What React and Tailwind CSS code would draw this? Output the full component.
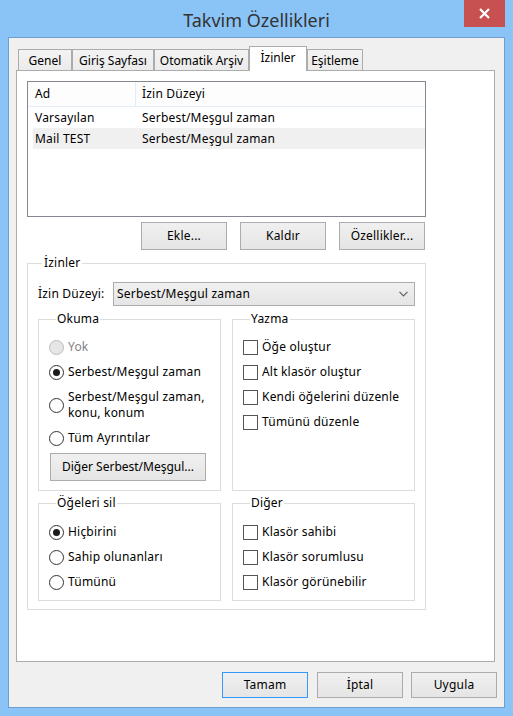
import React from "react";

function Radio({ checked, disabled }) {
  return (
    <span
      className={
        disabled
          ? "w-[15px] h-[15px] rounded-full border border-[#bcbcbc] bg-[#e6e6e6] shrink-0"
          : "w-[15px] h-[15px] rounded-full border border-[#333333] bg-white shrink-0 flex items-center justify-center"
      }
    >
      {checked && <span className="w-[7px] h-[7px] rounded-full bg-[#1a1a1a]" />}
    </span>
  );
}

function RadioRow({ children, checked, disabled }) {
  return (
    <div className="flex items-center gap-[4px]">
      <Radio checked={checked} disabled={disabled} />
      <span className={disabled ? "text-[#838383]" : ""}>{children}</span>
    </div>
  );
}

function CheckRow({ children }) {
  return (
    <div className="flex items-center gap-[4px]">
      <span className="w-[15px] h-[15px] border border-[#555555] bg-white shrink-0" />
      <span>{children}</span>
    </div>
  );
}

function Btn({ children, focus }) {
  return (
    <div
      className={
        focus
          ? "w-[86px] h-[26px] border border-[#3399ff] bg-gradient-to-b from-[#f0f0f0] to-[#e5e5e5] flex items-center justify-center"
          : "w-[86px] h-[26px] border border-[#acacac] bg-gradient-to-b from-[#f0f0f0] to-[#e5e5e5] flex items-center justify-center"
      }
    >
      {children}
    </div>
  );
}

function PanelBtn({ children }) {
  return (
    <div className="w-[86px] h-[28px] border border-[#acacac] bg-gradient-to-b from-[#f0f0f0] to-[#e5e5e5] flex items-center justify-center">
      {children}
    </div>
  );
}

export default function App() {
  return (
    <div className="w-[513px] h-[716px] bg-[#8ac4f6] flex flex-col font-['Noto_Sans',sans-serif] text-[12px] leading-[16px] tracking-[0.2px] text-black">
      {/* title bar */}
      <div className="h-[37px] grid grid-cols-[1fr_auto_1fr] shrink-0">
        <div />
        <div className="self-center text-[18px] leading-[24px] tracking-normal text-[#333333] pt-[2px]">
          Takvim Özellikleri
        </div>
        <div className="flex justify-end items-start">
          <div className="w-[41px] h-[27px] bg-[#c75050] mr-[8px] flex items-center justify-center">
            <svg width="11" height="11" viewBox="0 0 11 11">
              <path d="M1 1 L10 10 M10 1 L1 10" stroke="white" strokeWidth="2.2" />
            </svg>
          </div>
        </div>
      </div>

      {/* client */}
      <div className="ml-[8px] w-[497px] h-[671px] border border-[#6e9fd0] bg-[#f0f0f0] flex flex-col pt-[8px] shrink-0">
        {/* tabs */}
        <div className="flex items-end h-[24px] ml-[9px] tracking-normal">
          <div className="w-[54px] h-[21px] border border-b-0 border-[#acacac] bg-gradient-to-b from-[#f3f3f3] to-[#ebebeb] pt-[3px] text-center">
            Genel
          </div>
          <div className="w-[82px] h-[21px] border border-b-0 border-[#acacac] bg-gradient-to-b from-[#f3f3f3] to-[#ebebeb] pt-[3px] text-center whitespace-nowrap">
            Giriş Sayfası
          </div>
          <div className="w-[95px] h-[21px] border border-b-0 border-[#acacac] bg-gradient-to-b from-[#f3f3f3] to-[#ebebeb] pt-[3px] text-center whitespace-nowrap">
            Otomatik Arşiv
          </div>
          <div className="w-[58px] h-[25px] -mb-px relative z-10 border border-b-0 border-[#acacac] bg-white pt-[3px] text-center">
            İzinler
          </div>
          <div className="w-[56px] h-[21px] border border-b-0 border-[#acacac] bg-gradient-to-b from-[#f3f3f3] to-[#ebebeb] pt-[3px] text-center">
            Eşitleme
          </div>
        </div>

        {/* panel */}
        <div className="ml-[7px] w-[479px] h-[592px] bg-white border border-[#acacac] pl-[10px] pt-[10px]">
          {/* list */}
          <div className="w-[399px] h-[136px] border border-[#828790] flex flex-col">
            <div className="flex h-[25px] border-b border-[#e3ecf7] items-center bg-[#fdfdfd]">
              <div className="w-[108px] h-full pl-[7px] border-r border-[#e3ecf7] flex items-center">Ad</div>
              <div className="pl-[6px]">İzin Düzeyi</div>
            </div>
            <div className="flex h-[21px] items-center ml-[5px] pl-[2px]">
              <div className="w-[107px]">Varsayılan</div>
              <div>Serbest/Meşgul zaman</div>
            </div>
            <div className="flex h-[21px] items-center ml-[5px] pl-[2px] bg-[#f0f0f0]">
              <div className="w-[107px]">Mail TEST</div>
              <div>Serbest/Meşgul zaman</div>
            </div>
          </div>

          {/* list buttons */}
          <div className="w-[399px] mt-[5px] flex justify-end gap-[13px] pr-px">
            <PanelBtn>Ekle...</PanelBtn>
            <PanelBtn>Kaldır</PanelBtn>
            <PanelBtn>Özellikler...</PanelBtn>
          </div>

          {/* İzinler group */}
          <fieldset className="mt-[5px] w-[399px] border border-[#dcdcdc] px-[10px] pt-[11px] pb-[8px]">
            <legend className="ml-[4px] px-[2px] leading-[16px]">İzinler</legend>
            <div className="flex items-center h-[24px]">
              <span>İzin Düzeyi:</span>
              <div className="ml-auto w-[302px] h-[24px] border border-[#acacac] bg-gradient-to-b from-[#f0f0f0] to-[#e5e5e5] flex items-center pl-[3px] pr-[6px]">
                <span className="flex-1">Serbest/Meşgul zaman</span>
                <svg width="9" height="6" viewBox="0 0 9 6">
                  <path d="M0.5 0.8 L4.5 4.8 L8.5 0.8" stroke="#606060" strokeWidth="1.2" fill="none" />
                </svg>
              </div>
            </div>

            <div className="mt-[5px] flex gap-[11px]">
              <fieldset className="w-[183px] h-[180px] border border-[#dcdcdc] pl-[10px] pt-[12px]">
                <legend className="ml-[7px] px-px leading-[16px]">Okuma</legend>
                <div className="flex flex-col gap-[9px]">
                  <RadioRow disabled>Yok</RadioRow>
                  <RadioRow checked>Serbest/Meşgul zaman</RadioRow>
                  <RadioRow>
                    Serbest/Meşgul zaman,
                    <br />
                    konu, konum
                  </RadioRow>
                  <RadioRow>Tüm Ayrıntılar</RadioRow>
                </div>
                <div className="mt-[7px] ml-px w-[156px] h-[28px] border border-[#acacac] bg-gradient-to-b from-[#f0f0f0] to-[#e5e5e5] flex items-center justify-center whitespace-nowrap tracking-normal">
                  Diğer Serbest/Meşgul...
                </div>
              </fieldset>
              <fieldset className="w-[183px] h-[180px] border border-[#dcdcdc] pl-[10px] pt-[12px]">
                <legend className="ml-[7px] px-px leading-[16px]">Yazma</legend>
                <div className="flex flex-col gap-[9px]">
                  <CheckRow>Öğe oluştur</CheckRow>
                  <CheckRow>Alt klasör oluştur</CheckRow>
                  <CheckRow>Kendi öğelerini düzenle</CheckRow>
                  <CheckRow>Tümünü düzenle</CheckRow>
                </div>
              </fieldset>
            </div>

            <div className="mt-[4px] flex gap-[11px]">
              <fieldset className="w-[183px] h-[106px] border border-[#dcdcdc] pl-[10px] pt-[13px]">
                <legend className="ml-[7px] px-px leading-[16px]">Öğeleri sil</legend>
                <div className="flex flex-col gap-[9px]">
                  <RadioRow checked>Hiçbirini</RadioRow>
                  <RadioRow>Sahip olunanları</RadioRow>
                  <RadioRow>Tümünü</RadioRow>
                </div>
              </fieldset>
              <fieldset className="w-[183px] h-[106px] border border-[#dcdcdc] pl-[10px] pt-[13px]">
                <legend className="ml-[7px] px-px leading-[16px]">Diğer</legend>
                <div className="flex flex-col gap-[9px]">
                  <CheckRow>Klasör sahibi</CheckRow>
                  <CheckRow>Klasör sorumlusu</CheckRow>
                  <CheckRow>Klasör görünebilir</CheckRow>
                </div>
              </fieldset>
            </div>
          </fieldset>
        </div>

        {/* bottom buttons */}
        <div className="mt-[10px] flex justify-end pr-[7px]">
          <Btn focus>Tamam</Btn>
          <div className="ml-[9px]">
            <Btn>İptal</Btn>
          </div>
          <div className="ml-[8px]">
            <Btn>Uygula</Btn>
          </div>
        </div>
      </div>
    </div>
  );
}
